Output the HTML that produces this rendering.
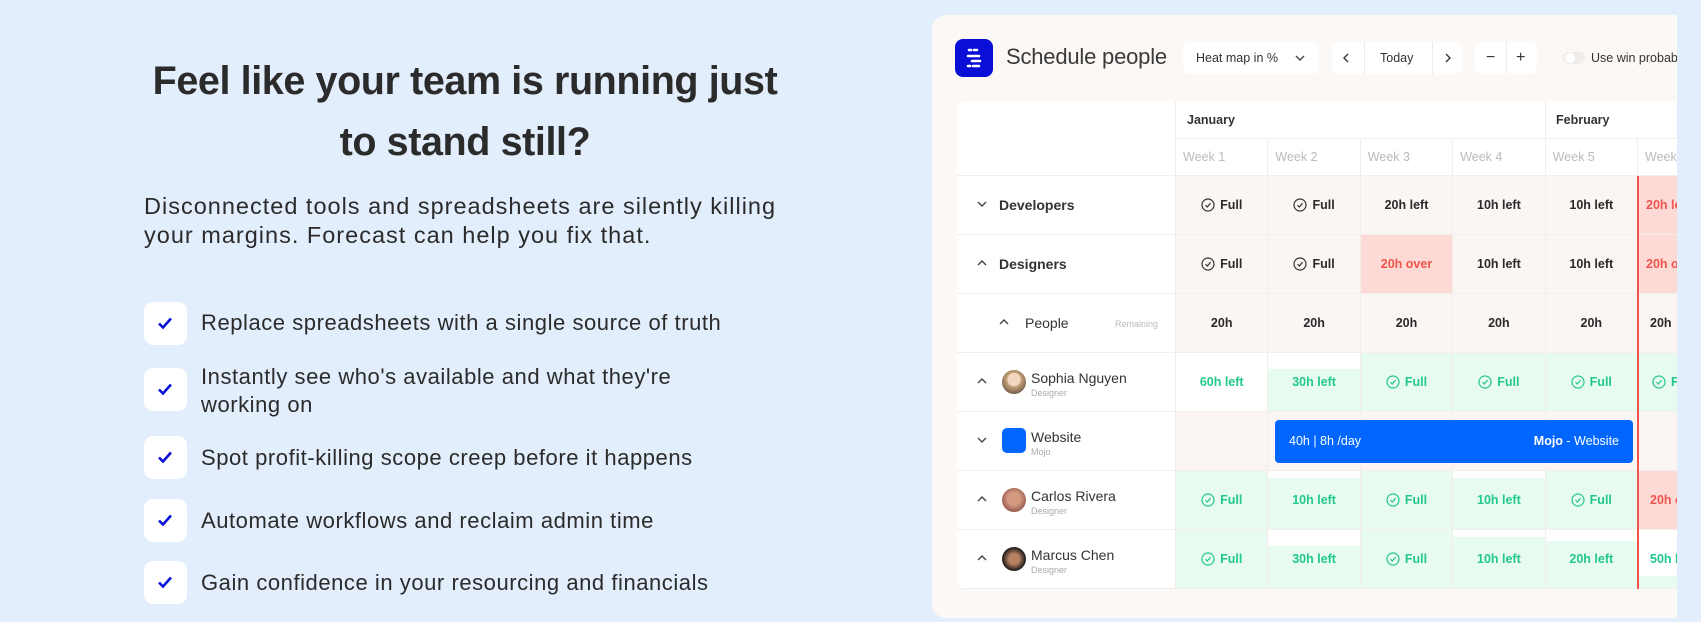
<!DOCTYPE html>
<html><head><meta charset="utf-8">
<style>
*{box-sizing:border-box;margin:0;padding:0}
body{width:1701px;height:622px;background:#E2EEFC;font-family:"Liberation Sans",sans-serif;position:relative;overflow:hidden;color:#2a2a2a}
.a{position:absolute}
h1{position:absolute;left:100px;width:730px;top:51px;text-align:center;font-size:39.5px;line-height:61px;font-weight:bold;color:#2b2b2b;letter-spacing:-0.4px}
.p{left:144px;top:192px;font-size:23.5px;line-height:29px;color:#2b2b2b;width:760px;letter-spacing:1px}
.box{position:absolute;left:144px;width:43px;height:43px;background:#fff;border-radius:9px}
.box svg{position:absolute;left:13px;top:14px}
.li{position:absolute;left:201px;font-size:22px;line-height:28px;color:#2b2b2b;letter-spacing:0.55px}
.card{left:932px;top:15px;width:745px;height:603px;background:#FCF8F6;border-radius:14px 0 0 14px;overflow:hidden}
.tbl{position:absolute;left:25px;top:86px;width:760px;height:488px;background:#fff;border-radius:8px;overflow:hidden}
.c{position:absolute;width:92.4px;height:59px;display:flex;align-items:center;justify-content:center;font-size:12.5px;font-weight:bold;color:#2a2a2a;border-right:1px solid #f2eeec;border-bottom:1px solid #f2eeec;gap:5px}
.pk{background:#FBF6F4}
.rd{background:#FDDAD6;color:#F0544C}
.gr{background:#E8FBF0;color:#22C98A}
.gt{color:#22C98A}
.fc{position:absolute;left:0;width:219px;height:59px;border-right:1px solid #f2eeec;border-bottom:1px solid #f2eeec;background:#fff}
.chev{position:absolute;left:20px;top:24px}
.nm{position:absolute;left:74px;top:17px;font-size:14px;color:#333}
.sub{position:absolute;left:74px;top:35px;font-size:9px;color:#aaa}
.btn{position:absolute;top:27px;height:32px;background:#fff;border-radius:7px;font-size:12.5px;color:#333}
</style></head><body>
<h1>Feel like your team is running just<br>to stand still?</h1>
<div class="a p">Disconnected tools and spreadsheets are silently killing<br>your margins. Forecast can help you fix that.</div>

<div class="box" style="top:302px"><svg width="16" height="14" viewBox="0 0 16 14"><path d="M2 7.5 L6 11.5 L14 2.5" stroke="#0A10D8" stroke-width="2.6" fill="none"/></svg></div>
<div class="li" style="top:309px">Replace spreadsheets with a single source of truth</div>
<div class="box" style="top:368px"><svg width="16" height="14" viewBox="0 0 16 14"><path d="M2 7.5 L6 11.5 L14 2.5" stroke="#0A10D8" stroke-width="2.6" fill="none"/></svg></div>
<div class="li" style="top:363px">Instantly see who's available and what they're<br>working on</div>
<div class="box" style="top:436px"><svg width="16" height="14" viewBox="0 0 16 14"><path d="M2 7.5 L6 11.5 L14 2.5" stroke="#0A10D8" stroke-width="2.6" fill="none"/></svg></div>
<div class="li" style="top:444px">Spot profit-killing scope creep before it happens</div>
<div class="box" style="top:499px"><svg width="16" height="14" viewBox="0 0 16 14"><path d="M2 7.5 L6 11.5 L14 2.5" stroke="#0A10D8" stroke-width="2.6" fill="none"/></svg></div>
<div class="li" style="top:507px">Automate workflows and reclaim admin time</div>
<div class="box" style="top:561px"><svg width="16" height="14" viewBox="0 0 16 14"><path d="M2 7.5 L6 11.5 L14 2.5" stroke="#0A10D8" stroke-width="2.6" fill="none"/></svg></div>
<div class="li" style="top:569px">Gain confidence in your resourcing and financials</div>

<div class="a card">
 <div class="a" style="left:23px;top:24px;width:38px;height:38px;background:#0A0FD8;border-radius:8px">
  <svg width="38" height="38" viewBox="0 0 38 38"><g stroke="#fff" stroke-width="2.6" stroke-linecap="round"><path d="M14 11h2M19 11h3M13 17h11M17 22h8M13 27h2M18 27h6"/></g></svg>
 </div>
 <div class="a" style="left:74px;top:29px;font-size:22px;color:#3a3a3a;letter-spacing:-0.2px">Schedule people</div>
 <div class="btn" style="left:251px;width:136px"><span class="a" style="left:13px;top:9px">Heat map in %</span><svg class="a" style="left:112px;top:12px" width="10" height="8" viewBox="0 0 10 8"><path d="M1 2l4 4 4-4" stroke="#444" stroke-width="1.4" fill="none"/></svg></div>
 <div class="btn" style="left:400px;width:130px"><svg class="a" style="left:10px;top:11px" width="8" height="10" viewBox="0 0 8 10"><path d="M6 1L2 5l4 4" stroke="#333" stroke-width="1.4" fill="none"/></svg><div class="a" style="left:32px;top:0;width:1px;height:32px;background:#f0ebe8"></div><span class="a" style="left:48px;top:9px">Today</span><div class="a" style="left:100px;top:0;width:1px;height:32px;background:#f0ebe8"></div><svg class="a" style="left:112px;top:11px" width="8" height="10" viewBox="0 0 8 10"><path d="M2 1l4 4-4 4" stroke="#333" stroke-width="1.4" fill="none"/></svg></div>
 <div class="btn" style="left:543px;width:62px"><span class="a" style="left:11px;top:7px;font-size:16px">−</span><div class="a" style="left:31px;top:0;width:1px;height:32px;background:#f0ebe8"></div><span class="a" style="left:41px;top:7px;font-size:16px">+</span></div>
 <div class="a" style="left:631px;top:37px;width:22px;height:12px;border-radius:6px;background:#f1ecea"></div>
 <div class="a" style="left:633px;top:38px;width:10px;height:10px;border-radius:5px;background:#fff"></div>
 <div class="a" style="left:659px;top:36px;font-size:12.5px;color:#333;white-space:nowrap">Use win probability</div>

 <div class="tbl">
  <div class="fc" style="top:0;height:75px"></div>
  <div class="a" style="left:219px;top:0;width:600px;height:38px;border-bottom:1px solid #f2eeec"></div>
  <div class="a" style="left:230px;top:12px;font-size:12.5px;font-weight:bold;color:#333">January</div>
  <div class="a" style="left:588px;top:0;width:1px;height:38px;background:#f2eeec"></div>
  <div class="a" style="left:599px;top:12px;font-size:12.5px;font-weight:bold;color:#333">February</div>
  <div class="c" style="left:219px;top:38px;height:37px;justify-content:flex-start;padding-left:7px;font-weight:normal;color:#bbb">Week 1</div>
  <div class="c" style="left:311.4px;top:38px;height:37px;justify-content:flex-start;padding-left:7px;font-weight:normal;color:#bbb">Week 2</div>
  <div class="c" style="left:403.8px;top:38px;height:37px;justify-content:flex-start;padding-left:7px;font-weight:normal;color:#bbb">Week 3</div>
  <div class="c" style="left:496.2px;top:38px;height:37px;justify-content:flex-start;padding-left:7px;font-weight:normal;color:#bbb">Week 4</div>
  <div class="c" style="left:588.6px;top:38px;height:37px;justify-content:flex-start;padding-left:7px;font-weight:normal;color:#bbb">Week 5</div>
  <div class="c" style="left:681px;top:38px;height:37px;justify-content:flex-start;padding-left:7px;font-weight:normal;color:#bbb">Week 6</div>

  <!-- Developers -->
  <div class="fc" style="top:75px"><svg class="chev" width="10" height="8" viewBox="0 0 10 8"><path d="M1 2l4 4 4-4" stroke="#444" stroke-width="1.4" fill="none"/></svg><span class="a" style="left:42px;top:21px;font-size:14px;font-weight:bold;color:#333">Developers</span></div>
  <div class="c pk" style="left:219px;top:75px"><svg width="14" height="14" viewBox="0 0 14 14"><circle cx="7" cy="7" r="6" fill="none" stroke="#333" stroke-width="1.2"/><path d="M4.5 7.2l1.8 1.8 3.3-3.8" stroke="#333" stroke-width="1.2" fill="none"/></svg>Full</div>
  <div class="c pk" style="left:311.4px;top:75px"><svg width="14" height="14" viewBox="0 0 14 14"><circle cx="7" cy="7" r="6" fill="none" stroke="#333" stroke-width="1.2"/><path d="M4.5 7.2l1.8 1.8 3.3-3.8" stroke="#333" stroke-width="1.2" fill="none"/></svg>Full</div>
  <div class="c pk" style="left:403.8px;top:75px">20h left</div>
  <div class="c pk" style="left:496.2px;top:75px">10h left</div>
  <div class="c pk" style="left:588.6px;top:75px">10h left</div>
  <div class="c rd" style="left:681px;top:75px;justify-content:flex-start;padding-left:8px">20h left</div>
  <!-- Designers -->
  <div class="fc" style="top:134px"><svg class="chev" width="10" height="8" viewBox="0 0 10 8"><path d="M1 6l4-4 4 4" stroke="#444" stroke-width="1.4" fill="none"/></svg><span class="a" style="left:42px;top:21px;font-size:14px;font-weight:bold;color:#333">Designers</span></div>
  <div class="c pk" style="left:219px;top:134px"><svg width="14" height="14" viewBox="0 0 14 14"><circle cx="7" cy="7" r="6" fill="none" stroke="#333" stroke-width="1.2"/><path d="M4.5 7.2l1.8 1.8 3.3-3.8" stroke="#333" stroke-width="1.2" fill="none"/></svg>Full</div>
  <div class="c pk" style="left:311.4px;top:134px"><svg width="14" height="14" viewBox="0 0 14 14"><circle cx="7" cy="7" r="6" fill="none" stroke="#333" stroke-width="1.2"/><path d="M4.5 7.2l1.8 1.8 3.3-3.8" stroke="#333" stroke-width="1.2" fill="none"/></svg>Full</div>
  <div class="c rd" style="left:403.8px;top:134px">20h over</div>
  <div class="c pk" style="left:496.2px;top:134px">10h left</div>
  <div class="c pk" style="left:588.6px;top:134px">10h left</div>
  <div class="c rd" style="left:681px;top:134px;justify-content:flex-start;padding-left:8px">20h over</div>
  <!-- People -->
  <div class="fc" style="top:193px"><svg class="a" style="left:42px;top:24px" width="10" height="8" viewBox="0 0 10 8"><path d="M1 6l4-4 4 4" stroke="#444" stroke-width="1.4" fill="none"/></svg><span class="a" style="left:68px;top:21px;font-size:14px;color:#333">People</span><span class="a" style="left:158px;top:25px;font-size:9px;color:#bbb">Remaining</span></div>
  <div class="c pk" style="left:219px;top:193px">20h</div>
  <div class="c pk" style="left:311.4px;top:193px">20h</div>
  <div class="c pk" style="left:403.8px;top:193px">20h</div>
  <div class="c pk" style="left:496.2px;top:193px">20h</div>
  <div class="c pk" style="left:588.6px;top:193px">20h</div>
  <div class="c pk" style="left:681px;top:193px;justify-content:flex-start;padding-left:12px">20h</div>
  <!-- Sophia -->
  <div class="fc" style="top:252px"><svg class="chev" width="10" height="8" viewBox="0 0 10 8"><path d="M1 6l4-4 4 4" stroke="#444" stroke-width="1.4" fill="none"/></svg><div class="a" style="left:45px;top:17px;width:24px;height:24px;border-radius:12px;background:radial-gradient(circle at 50% 40%,#f2d6c0 35%,#c9a57a 36%,#6b5848 80%)"></div><span class="nm">Sophia Nguyen</span><span class="sub">Designer</span></div>
  <div class="c gt" style="left:219px;top:252px;background:#fff">60h left</div>
  <div class="c gr" style="left:311.4px;top:252px;background:linear-gradient(#fff 0 16px,#E8FBF0 16px)">30h left</div>
  <div class="c gr" style="left:403.8px;top:252px"><svg width="14" height="14" viewBox="0 0 14 14"><circle cx="7" cy="7" r="6" fill="none" stroke="#22C98A" stroke-width="1.2"/><path d="M4.5 7.2l1.8 1.8 3.3-3.8" stroke="#22C98A" stroke-width="1.2" fill="none"/></svg>Full</div>
  <div class="c gr" style="left:496.2px;top:252px"><svg width="14" height="14" viewBox="0 0 14 14"><circle cx="7" cy="7" r="6" fill="none" stroke="#22C98A" stroke-width="1.2"/><path d="M4.5 7.2l1.8 1.8 3.3-3.8" stroke="#22C98A" stroke-width="1.2" fill="none"/></svg>Full</div>
  <div class="c gr" style="left:588.6px;top:252px"><svg width="14" height="14" viewBox="0 0 14 14"><circle cx="7" cy="7" r="6" fill="none" stroke="#22C98A" stroke-width="1.2"/><path d="M4.5 7.2l1.8 1.8 3.3-3.8" stroke="#22C98A" stroke-width="1.2" fill="none"/></svg>Full</div>
  <div class="c gr" style="left:681px;top:252px;justify-content:flex-start;padding-left:14px"><svg width="14" height="14" viewBox="0 0 14 14"><circle cx="7" cy="7" r="6" fill="none" stroke="#22C98A" stroke-width="1.2"/><path d="M4.5 7.2l1.8 1.8 3.3-3.8" stroke="#22C98A" stroke-width="1.2" fill="none"/></svg>Full</div>
  <!-- Website -->
  <div class="fc" style="top:311px"><svg class="chev" width="10" height="8" viewBox="0 0 10 8"><path d="M1 2l4 4 4-4" stroke="#444" stroke-width="1.4" fill="none"/></svg><div class="a" style="left:45px;top:16px;width:24px;height:25px;border-radius:5px;background:#0066FF"></div><span class="nm">Website</span><span class="sub">Mojo</span></div>
  <div class="c pk" style="left:219px;top:311px"></div><div class="c pk" style="left:311.4px;top:311px"></div><div class="c pk" style="left:403.8px;top:311px"></div><div class="c pk" style="left:496.2px;top:311px"></div><div class="c pk" style="left:588.6px;top:311px"></div><div class="c pk" style="left:681px;top:311px"></div>
  <div class="a" style="left:318px;top:319px;width:358px;height:43px;background:#0066FF;border-radius:4px;color:#fff;font-size:12.5px">
   <span class="a" style="left:14px;top:14px">40h | 8h /day</span><span class="a" style="right:14px;top:14px"><b>Mojo</b> - Website</span>
  </div>
  <!-- Carlos -->
  <div class="fc" style="top:370px"><svg class="chev" width="10" height="8" viewBox="0 0 10 8"><path d="M1 6l4-4 4 4" stroke="#444" stroke-width="1.4" fill="none"/></svg><div class="a" style="left:45px;top:17px;width:24px;height:24px;border-radius:12px;background:radial-gradient(circle at 50% 45%,#d49a80 35%,#8b4e44 80%)"></div><span class="nm">Carlos Rivera</span><span class="sub">Designer</span></div>
  <div class="c gr" style="left:219px;top:370px"><svg width="14" height="14" viewBox="0 0 14 14"><circle cx="7" cy="7" r="6" fill="none" stroke="#22C98A" stroke-width="1.2"/><path d="M4.5 7.2l1.8 1.8 3.3-3.8" stroke="#22C98A" stroke-width="1.2" fill="none"/></svg>Full</div>
  <div class="c gr" style="left:311.4px;top:370px;background:linear-gradient(#fff 0 7px,#E8FBF0 7px)">10h left</div>
  <div class="c gr" style="left:403.8px;top:370px"><svg width="14" height="14" viewBox="0 0 14 14"><circle cx="7" cy="7" r="6" fill="none" stroke="#22C98A" stroke-width="1.2"/><path d="M4.5 7.2l1.8 1.8 3.3-3.8" stroke="#22C98A" stroke-width="1.2" fill="none"/></svg>Full</div>
  <div class="c gr" style="left:496.2px;top:370px;background:linear-gradient(#fff 0 7px,#E8FBF0 7px)">10h left</div>
  <div class="c gr" style="left:588.6px;top:370px"><svg width="14" height="14" viewBox="0 0 14 14"><circle cx="7" cy="7" r="6" fill="none" stroke="#22C98A" stroke-width="1.2"/><path d="M4.5 7.2l1.8 1.8 3.3-3.8" stroke="#22C98A" stroke-width="1.2" fill="none"/></svg>Full</div>
  <div class="c rd" style="left:681px;top:370px;justify-content:flex-start;padding-left:12px">20h over</div>
  <!-- Marcus -->
  <div class="fc" style="top:429px"><svg class="chev" width="10" height="8" viewBox="0 0 10 8"><path d="M1 6l4-4 4 4" stroke="#444" stroke-width="1.4" fill="none"/></svg><div class="a" style="left:45px;top:17px;width:24px;height:24px;border-radius:12px;background:radial-gradient(circle at 50% 50%,#b98262 30%,#2a2220 65%)"></div><span class="nm">Marcus Chen</span><span class="sub">Designer</span></div>
  <div class="c gr" style="left:219px;top:429px"><svg width="14" height="14" viewBox="0 0 14 14"><circle cx="7" cy="7" r="6" fill="none" stroke="#22C98A" stroke-width="1.2"/><path d="M4.5 7.2l1.8 1.8 3.3-3.8" stroke="#22C98A" stroke-width="1.2" fill="none"/></svg>Full</div>
  <div class="c gr" style="left:311.4px;top:429px;background:linear-gradient(#fff 0 16px,#E8FBF0 16px)">30h left</div>
  <div class="c gr" style="left:403.8px;top:429px"><svg width="14" height="14" viewBox="0 0 14 14"><circle cx="7" cy="7" r="6" fill="none" stroke="#22C98A" stroke-width="1.2"/><path d="M4.5 7.2l1.8 1.8 3.3-3.8" stroke="#22C98A" stroke-width="1.2" fill="none"/></svg>Full</div>
  <div class="c gr" style="left:496.2px;top:429px;background:linear-gradient(#fff 0 7px,#E8FBF0 7px)">10h left</div>
  <div class="c gr" style="left:588.6px;top:429px;background:linear-gradient(#fff 0 11px,#E8FBF0 11px)">20h left</div>
  <div class="c gr" style="left:681px;top:429px;background:linear-gradient(#fff 0 46px,#E8FBF0 46px);justify-content:flex-start;padding-left:12px">50h left</div>

  <div class="a" style="left:680px;top:75px;width:1.5px;height:413px;background:#F0544C"></div>
 </div>
</div>
</body></html>
